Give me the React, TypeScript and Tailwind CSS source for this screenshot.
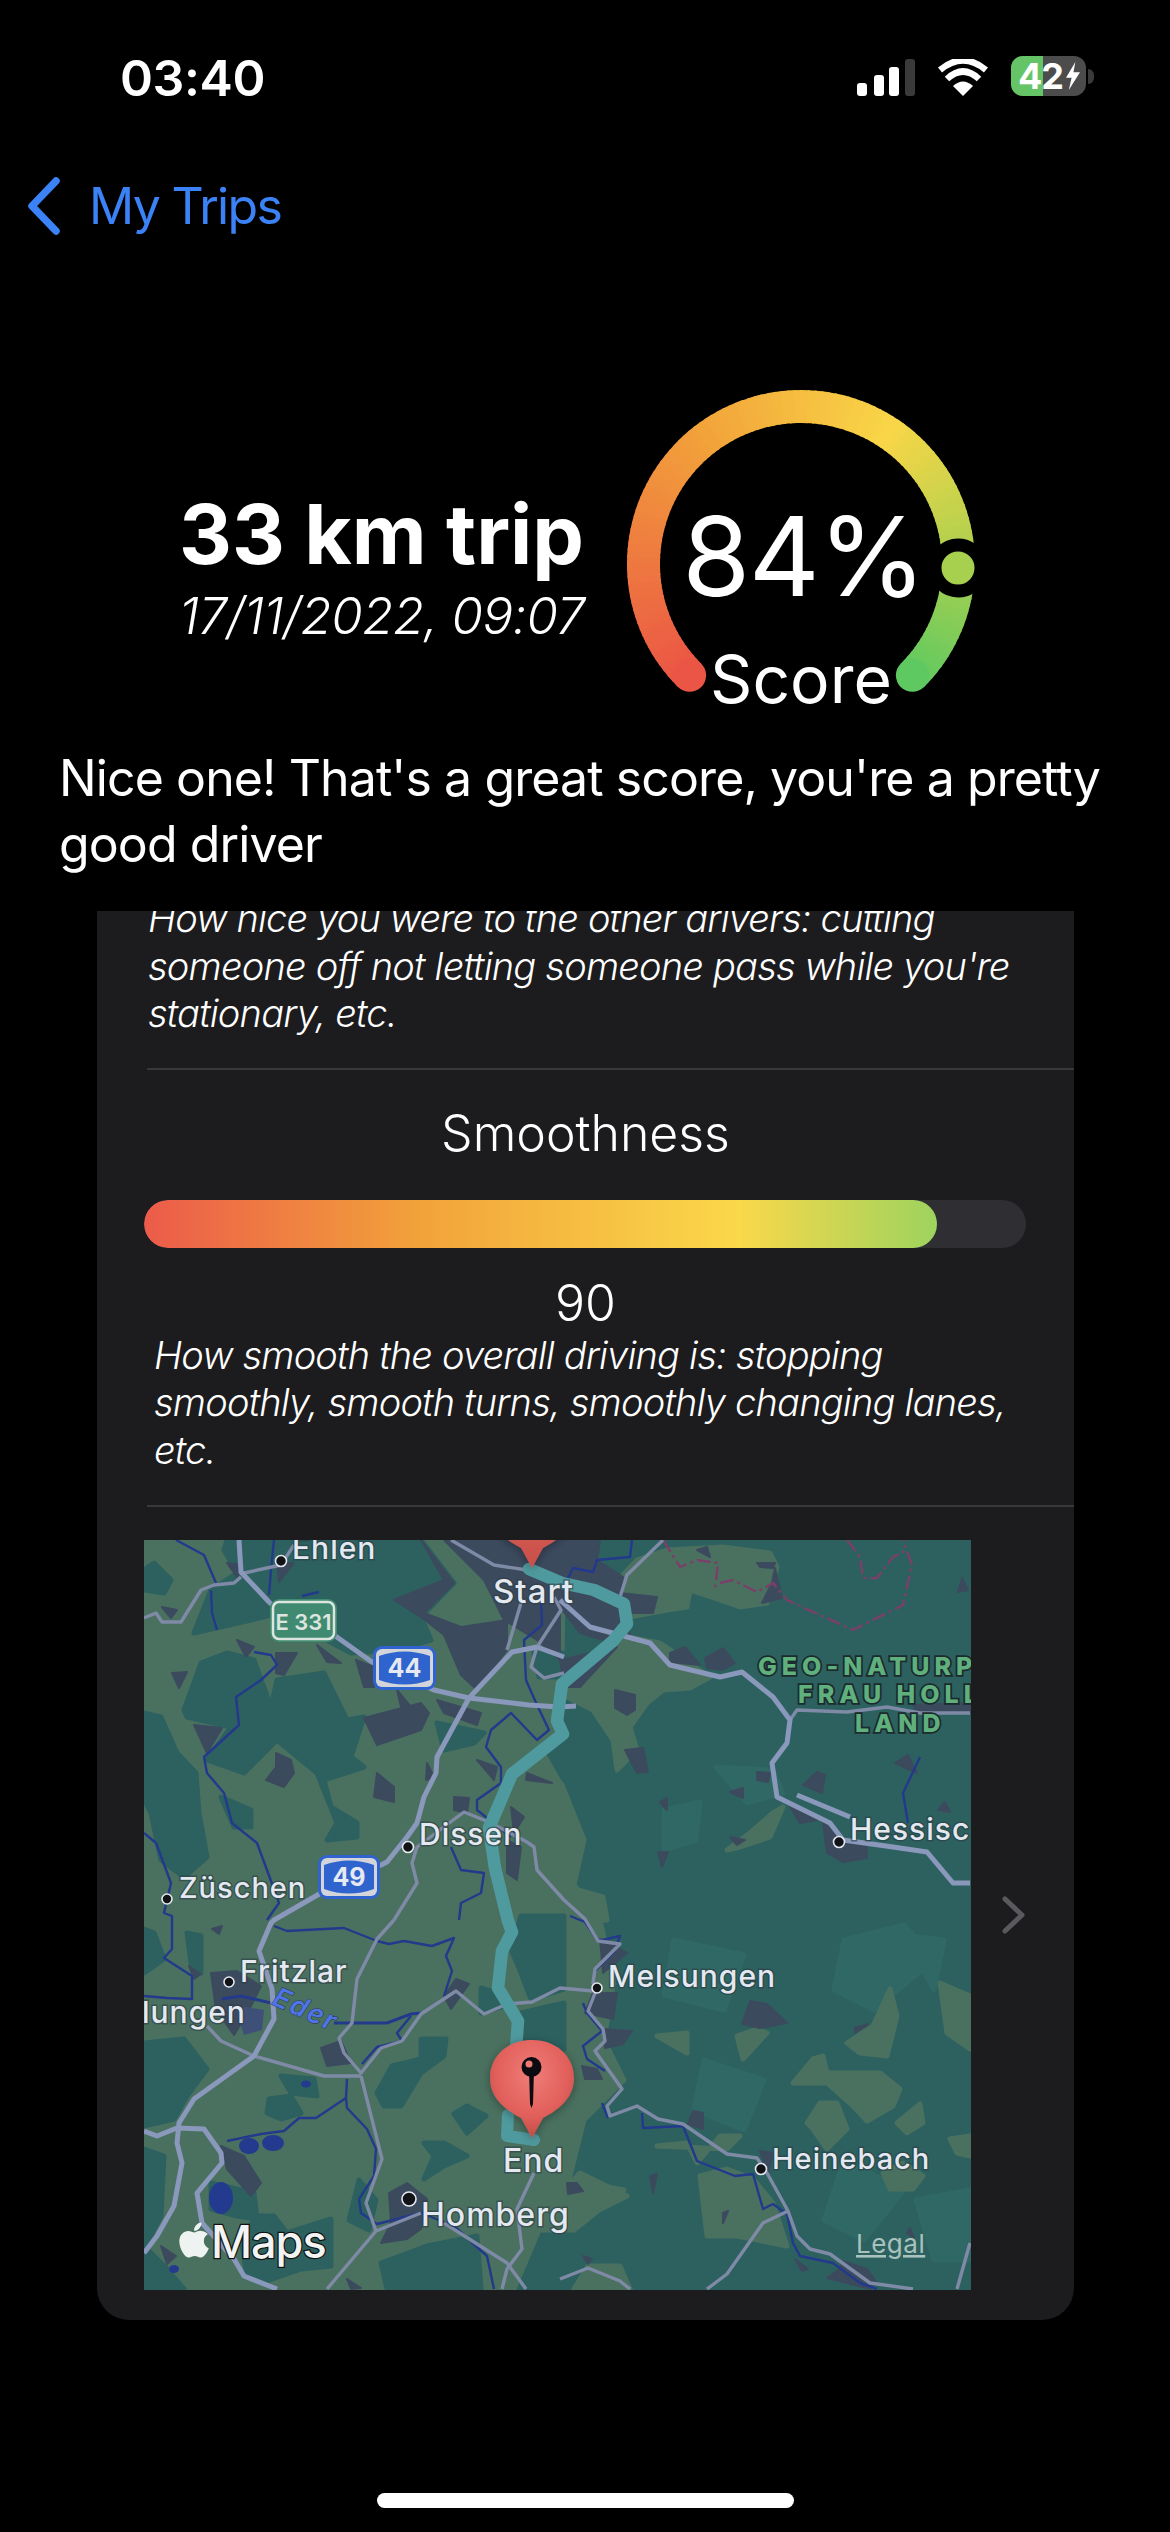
import React from "react";
import { FaApple } from "react-icons/fa";

const GREEN = "#4a7160";
const TEAL = "#2c6160";
const SLATE = "#3c4a5e";

const greens = [
  "0,0 420,0 416,240 440,300 430,345 455,376 470,440 460,500 480,540 440,580 425,640 480,650 430,690 395,690 370,749 0,749",
  "493,20 523,10 579,7 626,13 633,27 623,63 596,67 576,60 546,50 543,67 523,70 486,77 479,57 479,35",
  "484,97 516,103 566,137 546,148 519,150 503,163 486,187 493,210 473,230 469,200 449,170 423,157 426,143 473,110",
  "583,310 606,293 629,273 639,267 626,297 596,307",
  "649,543 669,519 679,516 683,533 736,533 756,549 749,566 723,581 709,566 683,543",
  "703,503 729,486 746,449 753,476 743,516 716,513",
  "796,443 826,456 826,509 803,493",
  "663,583 676,563 693,563 703,589 683,609 669,589",
  "753,583 776,564 779,583 763,593",
  "556,636 583,629 609,639 629,663 643,706 593,696 563,696",
  "513,606 543,603 553,623 576,596 596,596 583,609",
  "739,633 759,623 779,636 769,649 746,649",
  "513,496 543,493 543,513",
  "593,496 613,489 623,493 599,519",
  "806,599 826,596 826,616 813,613",
  "436,633 483,656 449,673 416,656",
  "444,726 476,726 486,749 430,749",
  "423,347 459,357 463,380 429,380",
];

const teals = [
  "133,0 277,0 310,43 277,77 287,100 253,110 207,113 177,97 160,67 107,80 50,93 67,50 93,33 80,10 83,0",
  "40,170 57,123 83,113 110,120 127,167 133,140 180,133 203,180 220,177 207,217 220,227 180,240 187,267 213,283 213,297 183,300 193,283 173,233 133,200 100,233 63,220 87,187 43,177",
  "0,173 17,177 33,213 52,233 55,273 63,317 40,337 17,320 7,273 0,260",
  "0,30 10,23 27,40 20,53 0,50",
  "77,257 107,270 107,287 90,287",
  "0,503 40,499 63,529 43,556 30,579 0,586",
  "0,389 10,393 20,419 0,433",
  "43,393 57,396 57,433 47,423",
  "0,609 20,616 17,676 0,709",
  "125,559 147,556 157,573 137,579 123,573",
  "137,536 170,539 173,556 147,553",
  "233,553 248,526 277,519 277,499 302,499 300,516 277,533 257,566 240,566",
  "310,574 323,566 342,576 323,593",
  "280,603 300,603 323,616 300,626 280,639 290,616",
  "237,723 283,706 333,696 337,749 243,749",
  "113,676 130,676 143,693 187,679 187,726 157,729 117,743 103,736 97,699",
  "67,643 110,653 113,679 93,676 67,669",
  "0,706 23,729 40,749 0,749",
  "377,376 420,376 420,449 387,459 377,433 367,409",
  "377,473 420,463 420,509 373,503",
  "337,448 353,453 360,466 337,473",
  "400,205 420,190 420,240",
  "293,183 340,193 330,203 300,210",
  "390,113 420,113 420,137 395,137",
  "215,640 232,660 225,690 205,680",
];

const lightTeals = [
  "572,227 629,230 639,253 603,263",
  "520,270 556,262 552,300 520,310",
  "700,400 760,385 790,420 730,470 690,450",
  "760,395 800,400 790,450",
  "530,400 600,415 580,470 520,455",
  "560,520 620,540 600,590 550,570",
  "700,620 760,650 720,700 680,680",
  "772,660 826,650 826,720 790,720",
];

const slates = [
  "277,0 310,43 280,73 317,87 363,80 363,110 333,150 317,135 300,95 277,77 250,60 300,40",
  "300,0 416,0 416,120 393,100 360,80 340,40",
  "416,0 456,0 453,20 479,37 476,53 513,57 509,73 483,73 486,97 459,100 436,93 416,67",
  "473,107 436,147 420,147 416,120",
  "220,178 277,163 285,173 277,190 233,205",
  "50,185 78,188 63,213",
  "132,213 147,220 150,233 140,247 122,240 132,227",
  "233,233 250,247 250,262 230,257",
  "28,133 43,132 35,148",
  "93,100 110,107 102,117",
  "132,113 153,113 140,135 132,133",
  "173,105 197,123 183,122",
  "212,120 230,127 230,147 220,147",
  "293,160 337,173 333,185 300,173",
  "18,67 33,70 27,78",
  "83,23 98,25 93,37",
  "133,23 150,23 135,42",
  "253,150 267,167 257,167",
  "310,257 325,258 323,273 310,270",
  "383,233 408,243 382,240",
  "333,220 353,227 350,240",
  "283,223 290,237 282,240",
  "367,267 380,277 370,293",
  "363,300 377,307 373,340 363,333",
  "471,150 491,155 491,170 483,175 471,168",
  "481,210 499,208 504,232 493,233",
  "526,113 541,107 556,125 526,122",
  "561,118 579,108 591,123 579,130 563,128",
  "618,63 628,43 631,28 638,58",
  "659,245 673,232 681,235 678,253",
  "751,223 764,215 773,233",
  "646,267 673,280 656,283",
  "679,283 696,297 723,307 723,318 699,322 683,313",
  "613,232 626,233 624,242 613,240",
  "586,252 599,248 599,258",
  "516,262 523,258 523,270",
  "514,312 524,312 518,327",
  "586,297 601,300 593,305",
  "769,165 826,163 826,173 773,172",
  "794,270 801,262 806,272",
  "814,52 818,38 824,50",
  "553,10 563,7 566,17",
  "613,23 631,23 629,28 616,27",
  "177,508 197,501 207,523 183,526",
  "67,433 93,431 117,446 105,470 90,495 72,470",
  "245,653 263,643 283,659 277,689 263,699 237,703 247,683",
  "77,606 100,616 117,643 107,656 83,629",
  "312,439 325,444 307,469 300,456",
  "17,706 32,716 23,724",
  "203,739 217,748 207,749",
  "45,426 57,434 50,439",
  "68,389 78,386 75,394",
  "606,461 623,464 643,483 616,488 598,484",
  "438,526 453,529 458,539 441,539",
  "459,489 488,491 479,504 461,508",
  "449,453 473,453 469,479 441,473",
  "456,399 483,413 459,433",
  "549,571 559,573 559,589 544,584",
  "616,611 629,613 624,633",
  "423,643 433,643 439,651 424,654",
  "699,721 723,729 733,743 726,749 683,738 696,729",
  "651,719 664,729 658,731",
  "766,688 770,698 763,693",
  "711,488 724,484 711,493",
  "579,673 584,671 579,683",
  "506,636 513,634 509,653",
  "439,716 448,719 444,724",
];

const mainRoads = [
  "95,0 97,32 125,62 145,80 190,95 228,122 290,150 325,158 385,165 415,167 432,166",
  "393,107 368,112 325,158 293,217 292,233 280,257 273,283 263,297 243,322 237,325 177,353 130,380 127,383 115,411 128,449 130,479 110,516 50,559 35,583 33,603 38,623 30,666 13,696 0,713",
  "416,60 446,87 506,103 526,125 576,137 598,132 629,157 646,180 643,203 628,223 633,257 686,283 699,300 749,307 783,312 809,343 826,343",
  "393,107 420,117",
  "653,255 706,277",
  "0,591 13,596 33,588 60,589 77,613 78,623 53,653 58,683 90,719 100,736 133,749",
];

const thinRoads = [
  "0,78 12,73 18,82 37,82 57,50 70,45 90,43 97,37",
  "100,33 137,25 150,5",
  "63,486 77,501 110,516 180,536 217,536",
  "250,380 233,399 213,439 208,483 195,498 200,513 217,533 237,508 258,501 277,474 312,451 340,474 363,464 388,462 416,448 449,451",
  "250,380 273,343 268,323 273,307 320,272 347,283 383,302 390,307 393,330 420,360 441,379 454,401 476,404 451,429 449,443 453,448 444,471 459,489 461,501 451,511 478,549 463,566 466,576 493,566 514,579 539,584 583,614 613,618 623,633 644,671 653,696 666,709 686,714 726,743 769,749",
  "644,671 619,683 583,734 563,749",
  "416,739 444,728 476,741 486,749",
  "183,749 232,691 277,673",
  "232,691 222,663 238,619 217,536",
  "300,683 363,723 382,749",
  "390,633 373,669 378,709 363,729 358,749",
  "307,0 350,25 383,30",
  "377,63 363,110",
  "519,0 483,35 476,57",
  "646,180 653,170 703,172 743,167 776,173 826,173",
  "393,107 387,127 400,138 420,133",
  "393,107 417,70 410,57",
  "826,703 813,749",
];

const rivers = [
  "32,0 60,15 72,43",
  "67,50 68,73 73,90",
  "130,0 127,30 125,55",
  "158,56 175,52",
  "110,112 127,115 133,125 117,140 92,157 95,185 60,217 63,233 80,253 88,283 113,303 123,330 135,363 123,380",
  "0,293 12,303 27,343 20,373 28,376 28,409 20,418 48,436 48,459 23,458 0,456",
  "130,386 143,391 200,388 233,401 245,404 260,401 288,406 310,398 302,416 308,431 300,456",
  "83,601 117,594 140,591 155,578 172,578 202,558 203,568 223,589 232,609 230,636 215,659 217,673 233,684 277,673 310,686 343,716 350,749",
  "203,539 202,558",
  "218,524 233,507 258,501 253,493 267,476",
  "397,60 398,85 380,100 382,140 393,165 405,190 393,200 367,173 347,190 342,207 357,227 357,243 333,260 333,270 367,297",
  "307,307 317,330 340,333 337,353 317,363 315,380",
  "488,0 486,17 453,20 449,32 429,28 423,40",
  "439,463 443,473 458,491 439,506 443,519 461,531",
  "458,563 464,578",
  "498,573 499,588 539,586 553,621 591,636 609,634 619,669 629,664 643,674 649,703 656,716 689,723 716,743 733,749",
  "776,217 759,253 764,283",
  "426,376 441,382 454,401 476,396 470,412 450,432",
];

const boundaries = [
  "519,0 536,27 553,20 574,23 571,50",
  "576,43 589,40 613,52 629,43 643,60 709,90 759,65 768,25 759,0",
  "703,0 716,17 719,38 733,38 749,17 763,10",
];

const towns: [number, number, number][] = [
  [137, 21, 5.5],
  [264, 307, 5.5],
  [23, 359, 5],
  [85, 442, 5],
  [453, 448, 5],
  [695, 302, 5.5],
  [617, 629, 5.5],
  [265, 659, 7],
];

const labels: [string, number, number, number][] = [
  ["Ehlen", 148, 19, 30],
  ["Start", 349, 63, 33],
  ["Dissen", 275, 305, 30],
  ["Züschen", 35, 358, 29],
  ["Fritzlar", 96, 442, 30],
  ["lungen", -2, 483, 30],
  ["Melsungen", 464, 447, 30],
  ["Hessisc", 706, 300, 30],
  ["Heinebach", 628, 629, 29],
  ["Homberg", 277, 686, 32],
  ["End", 359, 632, 32],
];

const Pin = ({ id, dy }: { id: string; dy: number }) => (
  <g transform={`translate(0 ${dy})`}>
    <path
      d="M388 598 L377 578 C358 568 346 556 346 538 C346 516 364 500 388 500 C412 500 430 516 430 538 C430 556 418 568 399 578 Z"
      fill={`url(#${id})`}
      filter="url(#pinShadow)"
    />
    <path d="M385 530 L390 530 L389 564 L387.5 568 L386 564 Z" fill="#0c0c10" />
    <circle cx="387.5" cy="527" r="10" fill="#0c0c10" />
    <circle cx="385" cy="524" r="3.5" fill="#ee7a76" />
  </g>
);

const Badge = ({ x, y, w, h, text }: { x: number; y: number; w: number; h: number; text: string }) => (
  <g>
    <rect x={x} y={y} width={w} height={h} rx="9" fill="#2f64cf" />
    <rect x={x + 3} y={y + 3} width={w - 6} height={h - 6} rx="6" fill="#d3d5da" />
    <path
      d={`M${x + 6} ${y + 10} Q${x + w / 2} ${y + 1} ${x + w - 6} ${y + 10} V${y + h - 10} Q${x + w / 2} ${y + h - 1} ${x + 6} ${y + h - 10} Z`}
      fill="#2f64cf"
    />
    <text x={x + w / 2} y={y + h / 2 + 9} textAnchor="middle" fontSize="25" fontWeight="700" fill="#e6e9f2">
      {text}
    </text>
  </g>
);

const Blobs = ({ list, fill, grow = 5 }: { list: string[]; fill: string; grow?: number }) => (
  <>
    {list.map((p) => (
      <polygon key={p} points={p} fill={fill} stroke={fill} strokeWidth={grow} strokeLinejoin="round" />
    ))}
  </>
);

const RouteMap = () => (
  <svg width="827" height="750" viewBox="0 0 827 750" className="shrink-0 block" style={{ fontFamily: "Inter, sans-serif" }}>
    <defs>
      <radialGradient id="pinEnd" cx="50%" cy="35%" r="60%">
        <stop offset="0%" stopColor="#ef7d79" />
        <stop offset="70%" stopColor="#e2605c" />
        <stop offset="100%" stopColor="#c8504a" />
      </radialGradient>
      <linearGradient id="pinStart" x1="0" y1="0" x2="0" y2="1">
        <stop offset="0%" stopColor="#e2605c" />
        <stop offset="100%" stopColor="#c8504a" />
      </linearGradient>
      <filter id="pinShadow" x="-30%" y="-30%" width="160%" height="160%">
        <feDropShadow dx="0" dy="2" stdDeviation="5" floodColor="#000" floodOpacity="0.35" />
      </filter>
    </defs>
    <rect width="827" height="750" fill={TEAL} />
    <Blobs list={lightTeals} fill="#2f6864" />
    <Blobs list={greens} fill={GREEN} />
    <Blobs list={teals} fill={TEAL} />
    <Blobs list={slates} fill={SLATE} grow={2} />
    <polygon points="90,465 120,470 118,490 100,495" fill="#3e5078" />
    {rivers.map((p) => (
      <polyline key={p} points={p} fill="none" stroke="#23398c" strokeWidth="2.4" strokeLinejoin="round" />
    ))}
    <ellipse cx="77" cy="658" rx="12" ry="16" fill="#233a8e" />
    <ellipse cx="105" cy="606" rx="10" ry="8" fill="#233a8e" />
    <ellipse cx="129" cy="603" rx="11" ry="8" fill="#233a8e" />
    <ellipse cx="30" cy="729" rx="5" ry="4" fill="#233a8e" />
    <ellipse cx="162" cy="544" rx="5" ry="3.5" fill="#233a8e" />
    <polyline points="127,463 97,456 78,459" fill="none" stroke="#23398c" strokeWidth="3" />
    <polyline points="190,483 243,483 267,474 277,473" fill="none" stroke="#23398c" strokeWidth="3" />
    {boundaries.map((p) => (
      <polyline key={p} points={p} fill="none" stroke="#7a4068" strokeWidth="2.4" strokeDasharray="14 4 3 4" />
    ))}
    {thinRoads.map((p) => (
      <polyline key={p} points={p} fill="none" stroke="#7f8aa6" strokeWidth="3.4" strokeLinejoin="round" />
    ))}
    {mainRoads.map((p) => (
      <polyline key={p} points={p} fill="none" stroke="#8a98bb" strokeWidth="5" strokeLinejoin="round" />
    ))}
    <polyline
      points="385,29 418,43 450,50 480,64 483,84 469,101 418,144 413,181 419,194 368,234 345,288 351,328 364,381 368,392 358,411 354,448 374,481 372,509"
      fill="none"
      stroke="#4f9a9e"
      strokeWidth="12.5"
      strokeLinejoin="round"
      strokeLinecap="round"
    />
    <polyline
      points="364,575 363,596 390,600"
      fill="none"
      stroke="#4f9a9e"
      strokeWidth="12"
      strokeLinejoin="round"
      strokeLinecap="round"
    />
    <g>
      <rect x="126" y="59" width="67" height="43" rx="9" fill="#3f8a70" />
      <rect x="129" y="62" width="61" height="37" rx="6" fill="#3f8a70" stroke="#dce5df" strokeWidth="2.5" />
      <text x="159.5" y="90" textAnchor="middle" fontSize="22" fontWeight="600" fill="#dce5df">E 331</text>
    </g>
    <Badge x={229} y={106} w={63} h={44} text="44" />
    <Badge x={174} y={315} w={62} h={44} text="49" />
    <text
      x="127"
      y="464"
      fontSize="27"
      fontStyle="italic"
      fontWeight="600"
      fill="#4f74ea"
      stroke="#2b3c3f"
      strokeWidth="1"
      paintOrder="stroke"
      transform="rotate(24 127 464)"
      letterSpacing="2"
    >
      Eder
    </text>
    {towns.map(([x, y, r]) => (
      <circle key={x} cx={x} cy={y} r={r} fill="#111316" stroke="#e4e8f0" strokeWidth="1.6" />
    ))}
    {labels.map(([t, x, y, s]) => (
      <text
        key={t}
        x={x}
        y={y}
        fontSize={s}
        fontWeight="500"
        letterSpacing="1"
        fill="#e4e8f0"
        stroke="#2b3c42"
        strokeOpacity="0.6"
        strokeWidth="3"
        paintOrder="stroke"
      >
        {t}
      </text>
    ))}
    <g fontSize="25" fontWeight="800" fill="#5fb07d" stroke="#1c2b2e" strokeWidth="3.5" paintOrder="stroke" letterSpacing="5">
      <text x="614" y="135">GEO-NATURP</text>
      <text x="654" y="163">FRAU HOLL</text>
      <text x="711" y="192">LAND</text>
    </g>
    <Pin id="pinStart" dy={-570} />
    <Pin id="pinEnd" dy={0} />
    <FaApple x={30} y={680} size={40} color="#eef2f0" />
    <text x="67" y="718" fontSize="45" fontWeight="500" fill="#f1f4f2" stroke="#111" strokeWidth="2.5" paintOrder="stroke" letterSpacing="-1">
      Maps
    </text>
    <text x="712" y="713" fontSize="26" fill="#a9c2bd" letterSpacing="0.5" textDecoration="underline">
      Legal
    </text>
  </svg>
);

const hex = (a: string) => [1, 3, 5].map((i) => parseInt(a.slice(i, i + 2), 16));
const stops: [number, string][] = [
  [0, "#eb5545"],
  [0.36, "#f2a33a"],
  [0.62, "#f9d647"],
  [0.83, "#a8d04f"],
  [1, "#5ec961"],
];
const colorAt = (t: number) => {
  let i = 0;
  while (i < stops.length - 2 && t > stops[i + 1][0]) i++;
  const [t0, c0] = stops[i];
  const [t1, c1] = stops[i + 1];
  const k = (t - t0) / (t1 - t0);
  const a = hex(c0);
  const b = hex(c1);
  return `rgb(${a.map((v, n) => Math.round(v + (b[n] - v) * k)).join(",")})`;
};

const Gauge = () => {
  const cx = 174;
  const cy = 174;
  const r = 157.5;
  const point = (t: number) => {
    const a = ((135 + 270 * t) * Math.PI) / 180;
    return [cx + r * Math.cos(a), cy + r * Math.sin(a)];
  };
  const n = 120;
  const segments = Array.from({ length: n }, (_, i) => {
    const [x0, y0] = point(i / n);
    const [x1, y1] = point(Math.min(1, (i + 1.3) / n));
    return <path key={i} d={`M${x0} ${y0} A${r} ${r} 0 0 1 ${x1} ${y1}`} stroke={colorAt(i / n)} strokeWidth="33" fill="none" />;
  });
  const [sx, sy] = point(0);
  const [ex, ey] = point(1);
  return (
    <div className="relative w-[348px] h-[326px] shrink-0">
      <svg width="348" height="326" viewBox="0 0 348 326" className="block">
        {segments}
        <circle cx={sx} cy={sy} r="16.5" fill={colorAt(0)} />
        <circle cx={ex} cy={ey} r="16.5" fill={colorAt(1)} />
        <circle cx="331" cy="178" r="23" fill="#a8d04f" stroke="#000" strokeWidth="13" />
      </svg>
      <div className="absolute left-[5px] right-0 top-[111px] text-center text-[110px] leading-[110px] tracking-[-1.5px] font-normal">84%</div>
      <div className="absolute left-0 right-0 top-[254px] text-center text-[66px] leading-[70px] font-normal">Score</div>
    </div>
  );
};

const StatusIcons = () => (
  <div className="flex items-end">
    <svg width="58" height="37" viewBox="0 0 58 37" className="block">
      <rect x="0" y="24" width="10" height="13" rx="3" fill="#fff" />
      <rect x="17" y="16" width="10" height="21" rx="3" fill="#fff" />
      <rect x="32" y="8" width="10" height="29" rx="3" fill="#fff" />
      <rect x="48" y="0" width="10" height="37" rx="3" fill="#3a3a3a" />
    </svg>
    <svg width="50" height="37" viewBox="0 0 50 37" className="block ml-[23px]">
      <path d="M25 37 L15 27 Q25 18 35 27 Z" fill="#fff" />
      <path d="M9 20 Q25 5 41 20" fill="none" stroke="#fff" strokeWidth="6.5" />
      <path d="M2 11 Q25 -8 48 11" fill="none" stroke="#fff" strokeWidth="6.5" />
    </svg>
    <div className="flex items-center ml-[23px]">
      <div className="relative w-[75px] h-[40px] rounded-[12px] overflow-hidden bg-[#4c4c4c] flex items-center text-[36px] leading-[40px] font-bold tracking-[-1px]">
        <div className="absolute left-0 top-0 bottom-0 w-[32px] bg-[#65c466]" />
        <span className="relative ml-[7px]">42</span>
        <svg width="14" height="28" viewBox="0 0 15 30" className="relative ml-[3px] shrink-0">
          <path d="M10 0 L0 17 H6 L3 30 L15 11 H8 Z" fill="#fff" />
        </svg>
      </div>
      <div className="w-[6px] h-[15px] rounded-r-full bg-[#3a3a3a] ml-[2px]" />
    </div>
  </div>
);

export default function App() {
  return (
    <div className="w-[1170px] h-[2532px] bg-black text-white flex flex-col overflow-hidden [font-family:Inter,sans-serif]">
      <div className="flex items-end justify-between pl-[120px] pr-[76px] h-[97px] shrink-0">
        <span className="text-[50px] leading-[44px] font-semibold tracking-[-0.4px] mb-[-3px]">03:40</span>
        <div className="mb-px"><StatusIcons /></div>
      </div>

      <div className="flex items-center pl-[27px] mt-[80px] h-[58px] shrink-0">
        <svg width="34" height="58" viewBox="0 0 34 58" className="block">
          <path d="M29 4 L5 29 L29 54" fill="none" stroke="#3b82f6" strokeWidth="7.5" strokeLinecap="round" strokeLinejoin="round" />
        </svg>
        <span className="text-[50px] leading-[58px] text-[#3b82f6] ml-[28px] tracking-[-1.7px]">My Trips</span>
      </div>

      <div className="flex items-start pl-[179px] mt-[155px] h-[355px] shrink-0">
        <div className="w-[448px] pt-[97px]">
          <div className="text-[82px] leading-[96px] font-bold whitespace-nowrap">33 km trip</div>
          <div className="text-[51px] leading-[60px] italic font-light tracking-[-0.5px] whitespace-nowrap mt-[3px]">17/11/2022, 09:07</div>
        </div>
        <Gauge />
      </div>

      <div className="pl-[59px] pr-[50px] text-[50px] leading-[66px] tracking-[-0.9px] h-[166px] shrink-0">
        Nice one! That's a great score, you're a pretty good driver
      </div>

      <div className="ml-[97px] w-[977px] h-[1409px] shrink-0 rounded-b-[32px] bg-[#1c1c1e] overflow-hidden">
        <div className="-mt-[16px] pl-[51px] pr-[40px] text-[38px] leading-[47.5px] tracking-[-0.8px] italic font-light">
          How nice you were to the other drivers: cutting someone off not letting someone pass while you're stationary, etc.
        </div>
        <div className="ml-[50px] h-[2px] bg-[#38383a] mt-[30px]" />
        <div className="text-center text-[50px] leading-[60px] font-light mt-[33px]">Smoothness</div>
        <div className="ml-[47px] w-[882px] h-[48px] rounded-full bg-[#2f2f33] mt-[37px] overflow-hidden">
          <div className="w-[793px] h-full rounded-full bg-[linear-gradient(90deg,#ec5b4a_0%,#f2a33a_35%,#fad84a_75%,#9dd35e_100%)]" />
        </div>
        <div className="text-center text-[50px] leading-[60px] font-light mt-[25px]">90</div>
        <div className="pl-[57px] pr-[40px] text-[38px] leading-[47.5px] tracking-[-0.8px] italic font-light -mt-[1px]">
          How smooth the overall driving is: stopping smoothly, smooth turns, smoothly changing lanes, etc.
        </div>
        <div className="ml-[50px] h-[2px] bg-[#38383a] mt-[31px]" />
        <div className="flex items-center ml-[47px] mt-[33px]">
          <RouteMap />
          <svg width="24" height="38" viewBox="0 0 24 38" className="block ml-[31px]">
            <path d="M3 3 L20 19 L3 35" fill="none" stroke="#5a5a5e" strokeWidth="5" strokeLinecap="round" strokeLinejoin="round" />
          </svg>
        </div>
      </div>

      <div className="w-[417px] h-[15px] rounded-full bg-white mx-auto mt-[173px] shrink-0" />
    </div>
  );
}
